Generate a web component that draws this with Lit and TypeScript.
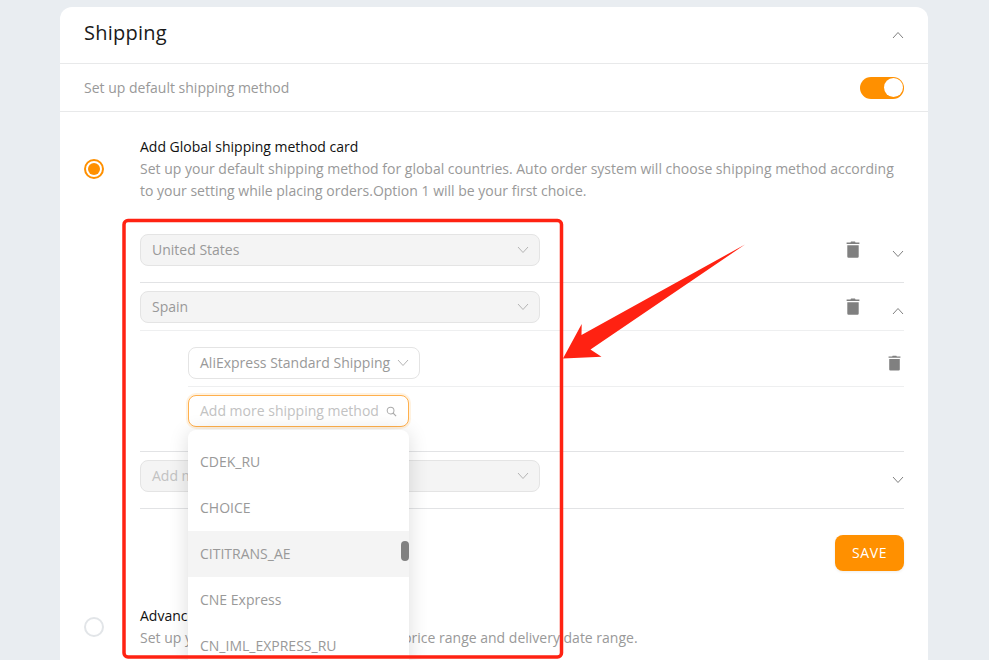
import { LitElement, html, css, svg } from "lit";
import { customElement } from "lit/decorators.js";

const chevron = (up: boolean) => html`<svg class="chev" width="12" height="8" viewBox="0 0 12 8">
  <path d=${up ? "M1 7L6 1.5L11 7" : "M1 1L6 6.5L11 1"} fill="none" stroke="currentColor" stroke-width="1"/>
</svg>`;

const trash = (size: number) => html`<svg class="bin" width=${size} height=${Math.round(size * 17 / 14)} viewBox="0 0 14 17">
  <path fill="#808080" d="M5 .6h4l.5 1h3.9v1.3H.6V1.6h3.9zM1.3 4.2h11.4v11.3a1.2 1.2 0 0 1-1.2 1.2h-9a1.2 1.2 0 0 1-1.2-1.2z"/>
</svg>`;

const search = html`<svg width="11" height="11" viewBox="0 0 12 12">
  <circle cx="5" cy="5" r="3.7" fill="none" stroke="#aaa" stroke-width="1.1"/>
  <path d="M7.8 7.8L11 11" stroke="#aaa" stroke-width="1.3" fill="none"/>
</svg>`;

const arrow = svg`<path fill="#ff2212" d="M745 244.5L590.5 349.5L601.5 356.7L563 358.5L581.7 324L581.5 335Z"/>`;

@customElement("app-root")
export class AppRoot extends LitElement {
  static styles = css`
    :host {
      display: block;
      position: relative;
      height: 660px;
      overflow: hidden;
      background: #e9edf1;
      font-family: "Open Sans", sans-serif;
      font-size: 14px;
      line-height: 22px;
      color: #999;
    }
    .card {
      margin: 7px 0 0 60px;
      width: 868px;
      background: #fff;
      border-radius: 12px 12px 0 0;
    }
    .head {
      height: 56px;
      padding: 0 24px;
      display: flex;
      align-items: center;
      justify-content: space-between;
      border-bottom: 1px solid #e8e9ea;
    }
    .head h2 {
      margin: 0 0 4px;
      font-size: 20px;
      font-weight: 500;
      letter-spacing: 0.25px;
      color: #1a1a1a;
    }
    .chev { color: #808080; display: block; flex: none; }
    .bin { display: block; }
    .default {
      height: 47px;
      padding: 0 24px;
      display: flex;
      align-items: center;
      justify-content: space-between;
      border-bottom: 1px solid #e8e9ea;
    }
    .toggle {
      width: 44px;
      height: 22px;
      border-radius: 11px;
      background: #ff9000;
      display: flex;
      align-items: center;
      justify-content: flex-end;
      padding-right: 1px;
      box-sizing: border-box;
    }
    .knob { width: 19px; height: 19px; border-radius: 50%; background: #fff; }
    .body { padding: 24px 24px 0; }
    .option { display: flex; align-items: center; gap: 36px; }
    .radio {
      width: 20px;
      height: 20px;
      box-sizing: border-box;
      border-radius: 50%;
      border: 2px solid #e2e5e8;
      flex: none;
      display: flex;
      align-items: center;
      justify-content: center;
    }
    .radio.on { border-color: #ff9000; }
    .radio.on::after {
      content: "";
      width: 12px;
      height: 12px;
      border-radius: 50%;
      background: #ff9000;
    }
    .opt-title { color: #111; font-weight: 500; }
    .list { margin: 24px 0 0 56px; }
    .row { padding: 8px 0 16px; border-bottom: 1px solid #e2e3e5; }
    .row.open { padding: 0; }
    .row-head { display: flex; align-items: flex-start; justify-content: space-between; }
    .row.open .row-head { padding: 8px 0 7px; border-bottom: 1px solid #eeeff0; }
    .select {
      box-sizing: border-box;
      height: 32px;
      border: 1px solid #e4e4e4;
      border-radius: 8px;
      padding: 0 11px;
      display: flex;
      align-items: center;
      justify-content: space-between;
      background: #fff;
      white-space: nowrap;
    }
    .select.grey { width: 400px; background: #f4f4f4; }
    .select .chev { color: #b4b4b4; margin-right: -1px; }
    .placeholder { color: #c2c2c2; }
    .actions { display: flex; align-items: flex-start; }
    .del { margin: 7px 32px 0 0; }
    .fold { margin-top: 16px; }
    .sub { margin-left: 48px; padding: 16px 0 24px; }
    .sub-row {
      display: flex;
      align-items: center;
      justify-content: space-between;
      padding-bottom: 7px;
      border-bottom: 1px solid #eeeff0;
    }
    .sub-row .select { width: 232px; gap: 6px; }
    .sub-del { margin-right: 3px; display: flex; }
    .add-wrap { position: relative; margin-top: 8px; width: 221px; }
    .add {
      border-color: #ffb04d;
      box-shadow: 0 0 0 2px rgba(255, 144, 0, 0.12);
    }
    .dropdown {
      position: absolute;
      z-index: 2;
      top: 35px;
      left: 0;
      width: 221px;
      height: 240px;
      padding-top: 9px;
      box-sizing: border-box;
      background: #fff;
      border-radius: 8px 8px 0 0;
      box-shadow: 0 2px 20px rgba(0, 0, 0, 0.14);
      overflow: hidden;
    }
    .item { height: 46px; padding: 0 12px; display: flex; align-items: center; }
    .item.hover { background: #f4f4f4; }
    .thumb {
      position: absolute;
      top: 111px;
      right: 0;
      width: 8px;
      height: 20px;
      border-radius: 4px;
      background: #808080;
    }
    .save-row { display: flex; justify-content: flex-end; padding-top: 26px; }
    .save {
      height: 36px;
      width: 69px;
      box-sizing: border-box;
      border-radius: 8px;
      background: #ff9000;
      color: #fff;
      font-weight: 500;
      font-size: 14px;
      letter-spacing: 0.6px;
      display: flex;
      align-items: center;
      justify-content: center;
      box-shadow: 0 1px 3px rgba(0, 0, 0, 0.08);
    }
    .advanced { margin-top: 34px; padding-bottom: 12px; }
    .annot { position: absolute; inset: 0; z-index: 5; pointer-events: none; }
  `;

  private row(label: string, open = false, placeholder = false, del = true) {
    return html`<div class="row-head">
      <div class="select grey">
        <span class=${placeholder ? "placeholder" : ""}>${label}</span>${chevron(false)}
      </div>
      <div class="actions">
        ${del ? html`<div class="del">${trash(14)}</div>` : ""}
        <div class="fold">${chevron(open)}</div>
      </div>
    </div>`;
  }

  render() {
    return html`
      <div class="card">
        <div class="head"><h2>Shipping</h2>${chevron(true)}</div>
        <div class="default">
          <span>Set up default shipping method</span>
          <div class="toggle"><div class="knob"></div></div>
        </div>
        <div class="body">
          <div class="option">
            <div class="radio on"></div>
            <div>
              <div class="opt-title">Add Global shipping method card</div>
              <div>Set up your default shipping method for global countries. Auto order system will choose shipping method according<br />to your setting while placing orders.Option 1 will be your first choice.</div>
            </div>
          </div>
          <div class="list">
            <div class="row">${this.row("United States")}</div>
            <div class="row open">
              ${this.row("Spain", true)}
              <div class="sub">
                <div class="sub-row">
                  <div class="select"><span>AliExpress Standard Shipping</span>${chevron(false)}</div>
                  <div class="sub-del">${trash(13)}</div>
                </div>
                <div class="add-wrap">
                  <div class="select add"><span class="placeholder">Add more shipping method</span>${search}</div>
                  <div class="dropdown">
                    <div class="item">CDEK_RU</div>
                    <div class="item">CHOICE</div>
                    <div class="item hover">CITITRANS_AE</div>
                    <div class="item">CNE Express</div>
                    <div class="item">CN_IML_EXPRESS_RU</div>
                    <div class="thumb"></div>
                  </div>
                </div>
              </div>
            </div>
            <div class="row">${this.row("Add more country", false, true, false)}</div>
            <div class="save-row"><div class="save">SAVE</div></div>
          </div>
          <div class="option advanced">
            <div class="radio"></div>
            <div>
              <div class="opt-title">Advanced shipping method</div>
              <div>Set up your shipping methods based on price range and delivery date range.</div>
            </div>
          </div>
        </div>
      </div>
      <svg class="annot" width="989" height="660" viewBox="0 0 989 660">
        <rect x="124" y="220.5" width="437.5" height="436.5" rx="4" fill="none" stroke="#ff2212" stroke-width="3.5"/>
        ${arrow}
      </svg>
    `;
  }
}
